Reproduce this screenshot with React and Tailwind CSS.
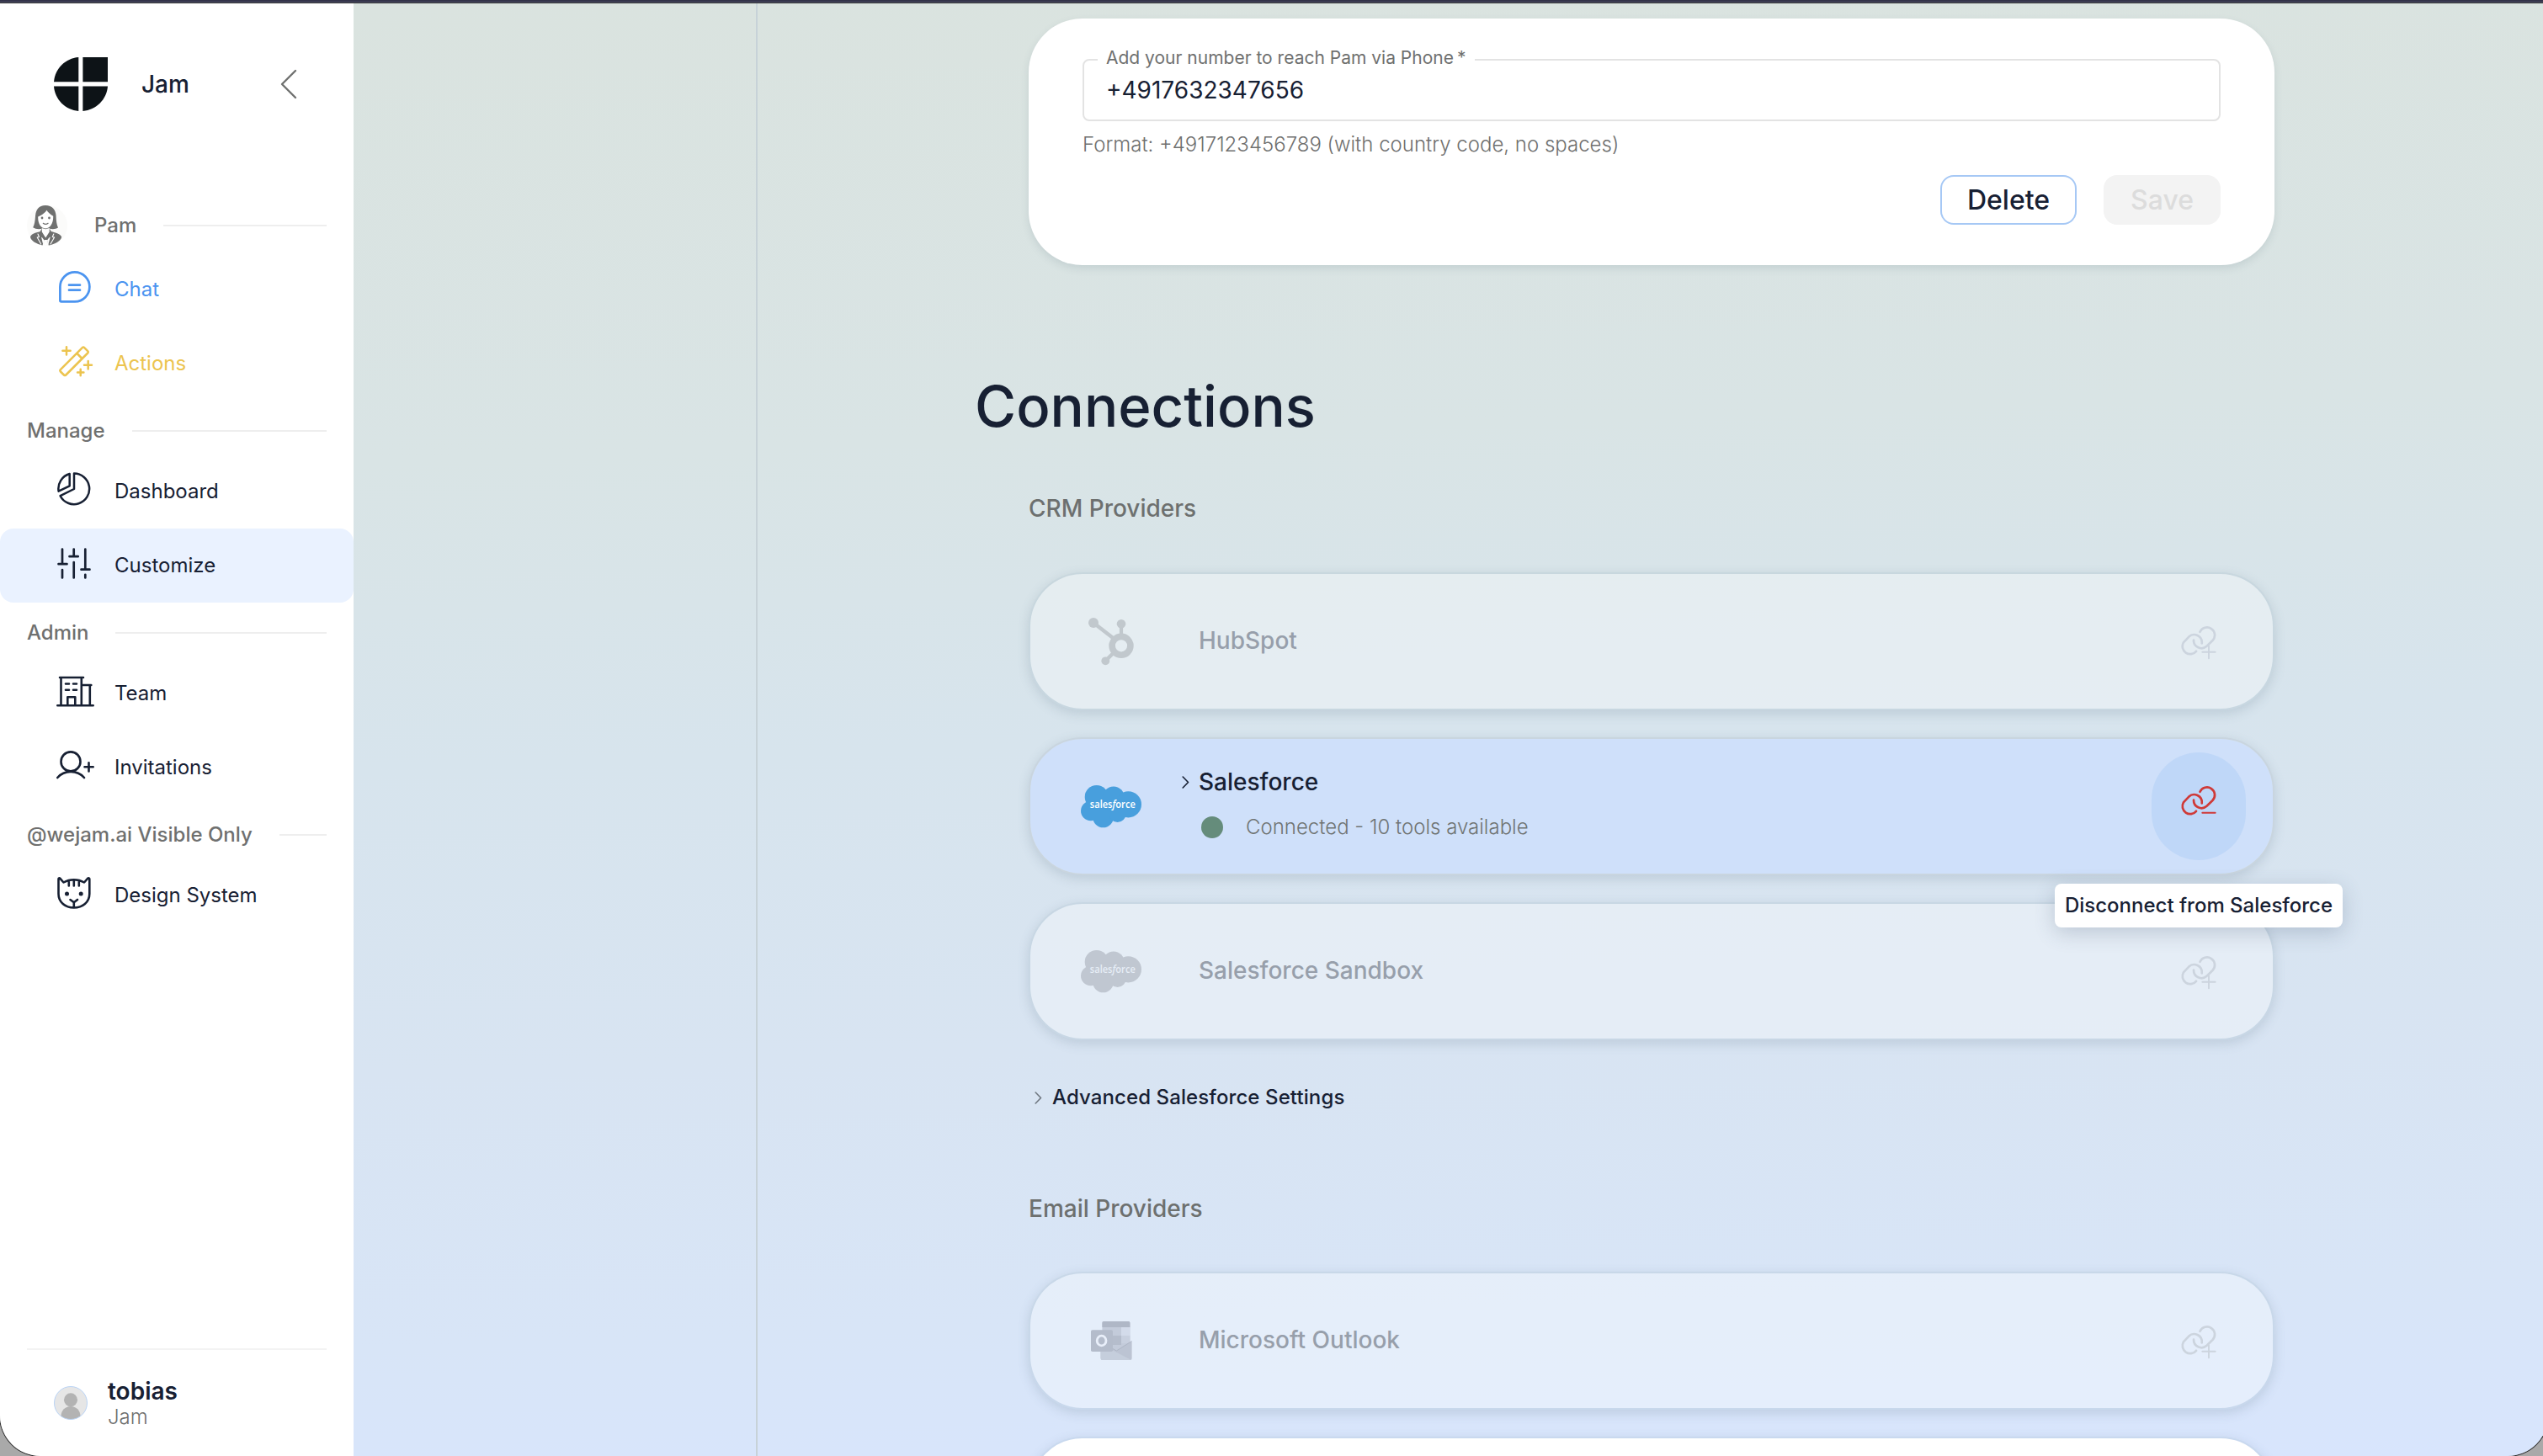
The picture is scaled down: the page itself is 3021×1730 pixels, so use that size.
import React from "react";

const line = { fill: "none", stroke: "currentColor", strokeLinecap: "round", strokeLinejoin: "round" };

function Logo() {
  return (
    <svg width="64" height="64" viewBox="0 0 64 64" fill="#0d1317">
      <path d="M29.3 0v29.3H0C1.200 13.600 13.600 1.200 29.300 0z" />
      <path d="M34.400 0H64v29.300H34.400z" />
      <path d="M0 34.600h29.300V64C13.600 62.800 1.200 50.300 0 34.600z" />
      <path d="M34.400 34.600H64C62.800 50.300 50.100 62.800 34.400 64z" />
    </svg>
  );
}

function PamAvatar() {
  return (
    <svg width="48" height="48" viewBox="0 0 48 48">
      <circle cx="24" cy="24" r="24" fill="#fbfbfa" />
      <path d="M22 0C13.500 0 10.500 6 10 13c-.4 6-1 9.500-2.800 13.300C10 28.200 14 28.500 18 27.800h9c4 .7 7.500.3 10-1.300-1.800-4-2.200-8-2.400-13.500C34.400 5.500 30.500 0 22 0z" fill="#6f706f" />
      <path d="M13.200 13.500C17 12 21 9.500 23.500 5.800c2 3.200 5 5.400 7.700 7 .3 8-3.200 14.500-9 14.500s-9.300-6-9-13.800z" fill="#fff" />
      <circle cx="18" cy="15" r="1.400" fill="#6f706f" />
      <circle cx="26.500" cy="15" r="1.400" fill="#6f706f" />
      <path d="M19.300 21.300c1.800 1.400 4 1.400 5.800 0" {...line} stroke="#6f706f" strokeWidth="1.200" />
      <path d="M15.500 31.300C10 32.500 5 34 4 37.500c.5 4.500 7.500 8.500 14.500 10L20.500 41l3.400 0 1.900 6.500c7.500-1.300 14.900-5.500 15.400-10-1.400-3.500-6.900-5-12.400-6.500L27 28h-9.500z" fill="#6f706f" />
      <path d="M17.800 27v4.500L22.200 38.500l4.500-7V27c-2.500 1.500-6.500 1.500-8.900 0z" fill="#fff" />
      <path d="M18.300 38.500l2.200 3-1.200 5.500-2.300-9.500zM26.200 38.500l-2.200 3 1.200 5.500 2.600-9.500zM22.200 42l1.300 5.500h-2.600z" fill="#fff" />
      <path d="M13 34l1.500 3.500-2.300.6 4.500 8M31.800 34l-1.500 3.500 2.300.6-4.600 8" {...line} stroke="#fff" strokeWidth="1.100" />
    </svg>
  );
}

function ChatIcon() {
  return (
    <svg width="38" height="38" viewBox="0 0 38 38" {...line} strokeWidth="2.700">
      <path d="M1.400 35V18.800A17.500 17.500 0 1 1 19 36.400H2.800A1.400 1.400 0 0 1 1.400 35z" />
      <path d="M12 16.700h13M12 22.700h13" />
    </svg>
  );
}

function WandIcon() {
  return (
    <svg width="40" height="37" viewBox="0 0 40 37" {...line} strokeWidth="2.500" className="overflow-visible">
      <path d="M1.900 28.100L27.800 2.100q1.200-1.200 2.400 0l4 4q1.200 1.200 0 2.400L8.300 34.500q-1.200 1.200-2.400 0l-4-4q-1.200-1.200 0-2.400z" />
      <path d="M21.500 9l6 6M9 1.300v9.200M4.400 5.800h9.200M34.700 18v9.400M30 22.700h9M25.700 27.800v7.400M22 31.500h7.400" />
    </svg>
  );
}

function PieIcon() {
  return (
    <svg width="40" height="40" viewBox="0 0 40 40" {...line} strokeWidth="2.500">
      <path d="M20 1.500A18.300 18.300 0 1 1 3.600 28.200L20 20z" />
      <path d="M14.700 2v14.300L1.600 22.600A18.400 18.400 0 0 1 14.700 2z" />
    </svg>
  );
}

function SlidersIcon() {
  return (
    <svg width="40" height="37" viewBox="0 0 40 37" {...line} strokeWidth="2.700">
      <path d="M6 1.500v17.300M1.500 19.200h10M6 26v9.500M19.700 1.500v8.300M14.500 10.200h10.200M19.700 17v18.500M33.300 1.500v24M28.500 25.700h10M33.300 31.800v3.700" />
    </svg>
  );
}

function BuildingIcon() {
  return (
    <svg width="45" height="37" viewBox="0 0 45 37" {...line} strokeWidth="2.600" className="-ml-px">
      <path d="M1.300 35.300h42.400M5.500 35V2M4 2h28M29.800 2v33M30 11h11.300M39.800 11v24M13.300 35V25.200h9V35M11 9.500h4M20 9.500h4M11 16.800h4M20 16.800h4" />
    </svg>
  );
}

function InviteIcon() {
  return (
    <svg width="45" height="34" viewBox="0 0 45 34" {...line} strokeWidth="2.600" className="-ml-px">
      <circle cx="17" cy="12.900" r="11.500" />
      <path d="M1.300 32C9.500 22.500 24.700 22.500 33 32M38.500 14.200v10.200M33.500 19.300h10.200" />
    </svg>
  );
}

function CatIcon() {
  return (
    <svg width="40" height="38" viewBox="0 0 40 38" {...line} strokeWidth="2.600">
      <path d="M1.500 2.500V20c0 10 8 16.500 18.300 16.500S38.300 30 38.300 20V2.500c0-1-1.300-1.500-2-.8L32 6.500c-7.500-4.400-17-4.400-24.500 0L3.300 1.700c-.7-.7-1.800-.2-1.800.8zM13.800 4v6.500M19.800 3.500v7M25.800 4v6.500M15.500 27l4.300 3.300L24 27M19.800 30.300V36" />
      <circle cx="11.500" cy="20" r="1.200" fill="currentColor" />
      <circle cx="28.200" cy="20" r="1.200" fill="currentColor" />
    </svg>
  );
}

function Chevron({ className }) {
  return (
    <svg width="9" height="15" viewBox="0 0 9 15" {...line} strokeWidth="1.600" className={className}>
      <path d="M1.200 1l6.300 6.500L1.200 14" />
    </svg>
  );
}

function LinkIcon({ mode }) {
  return (
    <svg width="43" height="40" viewBox="0 0 43 40" {...line} strokeWidth="2.700" className="overflow-visible">
      <path d="M23.500 6.800A9.200 9.200 0 1 1 38.500 17L31.500 23.800A9.300 9.300 0 0 1 16 16.700" />
      <path d="M25.700 20.300A9.200 9.200 0 0 0 10.100 12.800L3.900 19.400A9.200 9.200 0 0 0 19 29.800" />
      <path d={mode === "add" ? "M26.300 30.800h15.400M34 23.300v15" : "M26.300 31.800h15.400"} strokeWidth="1.900" />
    </svg>
  );
}

function HubSpotLogo() {
  return (
    <svg width="54" height="57" viewBox="0 0 54 57" fill="none" stroke="#c1c8cd">
      <circle cx="39" cy="33.300" r="10.900" strokeWidth="7.600" />
      <path d="M39 7v16" strokeWidth="4.200" />
      <path d="M6 6l23.500 18.200M31 40.500L20.300 51.300" strokeWidth="4.400" />
      <g fill="#c1c8cd" stroke="none">
        <circle cx="39" cy="7.300" r="5.300" />
        <circle cx="6" cy="6" r="6" />
        <circle cx="20.300" cy="51.300" r="4.900" />
      </g>
    </svg>
  );
}

function SalesforceLogo({ color, textColor }) {
  return (
    <svg width="72" height="51" viewBox="0 0 72 51" fill={color}>
      <circle cx="18.700" cy="14" r="14" />
      <circle cx="38.800" cy="14.500" r="13" />
      <circle cx="56.400" cy="22.800" r="15.600" />
      <circle cx="11.800" cy="30.500" r="11.800" />
      <circle cx="26.500" cy="38" r="12.300" />
      <circle cx="43.500" cy="33.800" r="10.200" />
      <path d="M12 16h46v18H12z" />
      <text x="37.800" y="27" textAnchor="middle" textLength="54" lengthAdjust="spacingAndGlyphs" fontSize="13" className="font-['Open_Sans',sans-serif] font-semibold" fill={textColor}>
        sales<tspan fontStyle="italic">f</tspan>orce
      </text>
    </svg>
  );
}

function OutlookLogo() {
  return (
    <svg width="49" height="46" viewBox="0 0 49 46">
      <rect x="13.400" y="0" width="33" height="36" rx="1.800" fill="#c3cbda" />
      <path d="M15.200 0h29.400a1.800 1.800 0 0 1 1.800 1.800V7h-33V1.800A1.800 1.800 0 0 1 15.200 0z" fill="#afb7c6" />
      <path d="M36 7h10.400v10H36z" fill="#d3dbea" />
      <path d="M25 17h11v11H25z" fill="#b5bdcc" />
      <path d="M36 17h10.400v9H36z" fill="#c8d0df" />
      <path d="M48.600 23.500V44a2 2 0 0 1-2 2h-33a2 2 0 0 1-2-2V24l18.800 11z" fill="#bcc4d3" />
      <path d="M11.600 27L47.500 45.700a2 2 0 0 1-1 .3h-33a2 2 0 0 1-1.900-2z" fill="#c5cedc" />
      <path d="M26 32.500l4.400 2.500L48.500 23.500" fill="none" stroke="#a9b1c0" strokeWidth="0.800" />
      <rect x="0" y="10.300" width="26" height="25.700" rx="1.800" fill="#b4bccb" />
      <ellipse cx="12.600" cy="23" rx="5.400" ry="5.800" fill="none" stroke="#e9effa" strokeWidth="2.800" />
    </svg>
  );
}

function SectionLabel({ children, avatar }) {
  return (
    <div className={`flex h-16 items-center px-8 ${avatar ? "" : "pt-[7px]"}`}>
      {avatar && <div className="mr-8 shrink-0">{avatar}</div>}
      <span className="shrink-0 text-2xl font-medium text-[#6f706f]">{children}</span>
      <div className="ml-8 h-0.5 grow bg-[#eeeeee]" />
    </div>
  );
}

function NavItem({ icon, label, className = "text-[#172033]" }) {
  return (
    <div className={`flex h-[88px] items-center rounded-2xl ${className}`}>
      <div className="flex w-[136px] justify-start pb-[6px] pl-[68px]">{icon}</div>
      <span className="text-2xl">{label}</span>
    </div>
  );
}

function Sidebar() {
  return (
    <aside className="flex w-[420px] shrink-0 flex-col bg-white">
      <div className="flex h-[192px] items-center pl-16">
        <Logo />
        <span className="ml-10 pb-px text-[28px] font-medium text-[#172033]">Jam</span>
        <svg width="20" height="36" viewBox="0 0 20 36" {...line} strokeWidth="2.400" className="ml-auto mr-[67px] text-[#6f706f]">
          <path d="M18 2L2 18l16 16" />
        </svg>
      </div>
      <nav className="mt-10 flex flex-col">
        <SectionLabel avatar={<PamAvatar />}>Pam</SectionLabel>
        <NavItem icon={<span className="pl-0.5"><ChatIcon /></span>} label="Chat" className="text-[#4b94f0]" />
        <NavItem icon={<span className="pl-0.5"><WandIcon /></span>} label="Actions" className="text-[#ecc44f]" />
        <SectionLabel>Manage</SectionLabel>
        <NavItem icon={<PieIcon />} label="Dashboard" />
        <NavItem icon={<SlidersIcon />} label="Customize" className="bg-[#eaf2ff] text-[#172033]" />
        <SectionLabel>Admin</SectionLabel>
        <NavItem icon={<BuildingIcon />} label="Team" />
        <NavItem icon={<InviteIcon />} label="Invitations" />
        <SectionLabel>@wejam.ai Visible Only</SectionLabel>
        <NavItem icon={<CatIcon />} label="Design System" />
      </nav>
      <div className="mx-8 mt-auto h-[128px] border-t-2 border-[#f3f3f3]">
        <div className="flex items-start pl-8 pt-[33px]">
          <svg width="40" height="40" viewBox="0 0 40 40" className="mt-[10px]">
            <clipPath id="user"><circle cx="20" cy="20" r="19.500" /></clipPath>
            <circle cx="20" cy="20" r="19.500" fill="#e6e6e6" />
            <g fill="#b3b3b3" clipPath="url(#user)">
              <circle cx="20" cy="16.300" r="8" />
              <path d="M8.500 40v-4.500C8.500 29 13.500 24 20 24s11.500 5 11.500 11.500V40z" />
            </g>
            <circle cx="20" cy="20" r="19.500" fill="none" stroke="#b9d3f5" strokeWidth="1" />
          </svg>
          <div className="ml-6 flex flex-col">
            <span className="text-[28px] font-semibold leading-[32px] text-[#172033]">tobias</span>
            <span className="text-2xl font-light leading-[30px] text-[#6f706f]">Jam</span>
          </div>
        </div>
      </div>
    </aside>
  );
}

function PhoneCard() {
  return (
    <div className="flex h-[293px] flex-col rounded-[64px] bg-white px-16 pt-12 shadow-[0_4px_10px_rgba(90,115,125,0.16)]">
      <div className="relative flex h-[74px] items-center rounded-lg border-2 border-[#e3e3e3] pl-[26px]">
        <span className="pb-px text-[28px] text-[#172033]">+4917632347656</span>
        <span className="absolute -top-[18px] left-4 bg-white pl-[10px] pr-[11px] text-[21px] leading-[30px] text-[#6f706f]">
          Add your number to reach Pam via Phone<span className="pl-1">*</span>
        </span>
      </div>
      <p className="mt-[11px] text-2xl font-light leading-[34px] text-[#6f706f]">
        Format: +4917123456789 (with country code, no spaces)
      </p>
      <div className="mt-[19px] flex justify-end gap-8">
        <div className="flex h-[59px] w-[162px] items-center justify-center rounded-2xl border-2 border-[#a6c8f5] text-[32px] font-medium text-[#172033]">Delete</div>
        <div className="flex h-[59px] w-[139px] items-center justify-center rounded-2xl bg-[#f3f3f3] text-[32px] font-medium text-[#dcdcdc]">Save</div>
      </div>
    </div>
  );
}

const cardShadow = "shadow-[0_4px_14px_rgba(80,105,125,0.20)]";

function ProviderCard({ logo, name }) {
  return (
    <div className={`flex h-[164px] items-center rounded-[64px] border-2 border-[#8ca5b4]/20 bg-white/35 bg-clip-padding pr-[67px] ${cardShadow}`}>
      <div className="flex w-48 justify-center">{logo}</div>
      <span className="ml-2 grow pb-[2px] text-[28px] font-medium text-[#979fab]">{name}</span>
      <div className="pt-[3px] text-[#ccd4de]"><LinkIcon mode="add" /></div>
    </div>
  );
}

function SalesforceCard() {
  return (
    <div className={`relative flex h-[164px] items-center rounded-[64px] border-2 border-[#c9d5df] bg-[#cfe0fa] bg-clip-padding ${cardShadow}`}>
      <div className="flex w-[180px] justify-center pl-3">
        <SalesforceLogo color="#489fdd" textColor="#ffffff" />
      </div>
      <div className="flex grow flex-col pb-1">
        <div className="flex h-[54px] items-center">
          <Chevron className="text-[#172033]" />
          <span className="ml-[11px] text-[28px] font-medium text-[#172033]">Salesforce</span>
        </div>
        <div className="flex h-[54px] items-center">
          <div className="ml-[23px] size-[26px] rounded-full bg-[#658c7b]" />
          <span className="ml-[27px] text-2xl font-light text-[#6f7473]">Connected - 10 tools available</span>
        </div>
      </div>
      <div className="mr-8 flex h-32 w-28 items-center justify-center rounded-full bg-[#bfd7f8] pb-2 pr-px text-[#cf3a38]">
        <LinkIcon mode="remove" />
      </div>
      <div className="absolute -right-[83px] top-[172px] z-10 flex h-[52px] w-[342px] items-center justify-center whitespace-nowrap rounded-lg bg-white text-2xl font-medium text-[#172033] shadow-[0_6px_24px_rgba(60,80,110,0.24)]">
        Disconnect from Salesforce
      </div>
    </div>
  );
}

function GroupTitle({ children, className }) {
  return <h2 className={`text-[28px] font-medium leading-10 text-[#6d706f] ${className}`}>{children}</h2>;
}

function Main() {
  return (
    <main className="flex grow bg-[linear-gradient(178deg,#dae3df_0%,#d9e4e5_30%,#d7e4ed_50%,#d8e4f2_70%,#d8e5f7_88%,#d8e5fd_100%)]">
      <div className="w-[480px] shrink-0 border-r-2 border-[#c7d2d8]" />
      <div className="ml-[258px] flex h-[1726px] w-[1544px] flex-col pt-[18px]">
        <div className="ml-16">
          <PhoneCard />
        </div>
        <h1 className="mt-32 text-[67px] font-medium leading-[80px] text-[#172033]">Connections</h1>
        <section className="ml-16 flex flex-col">
          <GroupTitle className="mt-[61px]">CRM Providers</GroupTitle>
          <div className="mt-14 flex flex-col gap-8">
            <ProviderCard logo={<HubSpotLogo />} name="HubSpot" />
            <SalesforceCard />
            <ProviderCard logo={<SalesforceLogo color="#c0c7d1" textColor="#e6edf6" />} name="Salesforce Sandbox" />
          </div>
          <div className="mt-12 flex h-10 items-center pl-[7px]">
            <Chevron className="text-[#6f7780]" />
            <span className="ml-3 text-2xl font-medium tracking-[0.1px] text-[#172033]">Advanced Salesforce Settings</span>
          </div>
          <GroupTitle className="mt-[92px]">Email Providers</GroupTitle>
          <div className="mt-[55px] flex flex-col gap-8">
            <ProviderCard logo={<OutlookLogo />} name="Microsoft Outlook" />
            <div className={`h-[164px] rounded-[64px] border-2 border-[#c9d9ef] bg-white ${cardShadow}`} />
          </div>
        </section>
      </div>
    </main>
  );
}

export default function App() {
  return (
    <div className="flex h-[1730px] w-[3021px] flex-col overflow-hidden bg-[#a9a9a9] font-[Inter,sans-serif]">
      <div className="h-1 shrink-0 border-b-2 border-[#4f5069] bg-[#333349]" />
      <div className="flex h-[1726px] w-[3027px] shrink-0 overflow-hidden rounded-b-[48px] shadow-[0_0_0_1px_#2b2b2b]">
        <Sidebar />
        <Main />
      </div>
    </div>
  );
}
